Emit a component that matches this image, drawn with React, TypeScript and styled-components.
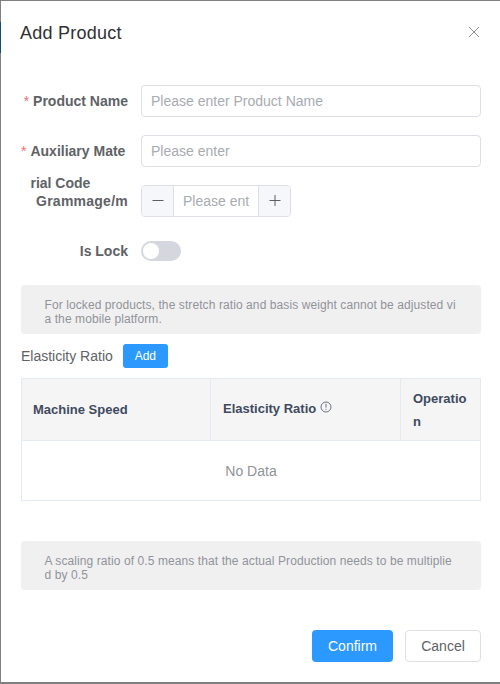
import styled, { createGlobalStyle } from 'styled-components';

const GlobalStyle = createGlobalStyle`
  html, body {
    margin: 0;
    padding: 0;
    background: #808080;
  }
  * {
    box-sizing: border-box;
  }
  input::placeholder {
    color: #a8abb2;
    opacity: 1;
  }
`;

function CloseIcon() {
  return (
    <CloseMark width="12" height="12" viewBox="0 0 12 12" fill="none">
      <path d="M1 1L11 11M11 1L1 11" stroke="#8a8f99" strokeWidth="1" />
    </CloseMark>
  );
}

function InfoIcon() {
  return (
    <svg width="12" height="12" viewBox="0 0 12 12" fill="none">
      <circle cx="6" cy="6" r="5" stroke="#4a5266" strokeWidth="0.8" />
      <path d="M6 2.8v3.8M6 7.9v1" stroke="#4a5266" strokeWidth="0.8" />
    </svg>
  );
}

function StepIcon({ plus }: { plus?: boolean }) {
  return (
    <svg width="12" height="12" viewBox="0 0 12 12" fill="none">
      <path d={plus ? 'M0.5 5.5h11M6 0v11' : 'M0.5 5.5h11'} stroke="#5a5e66" strokeWidth="1" />
    </svg>
  );
}

function App() {
  return (
    <>
      <GlobalStyle />
      <Overlay>
        <BlueEdge />
        <Modal>
          <Header>
            <Title>Add Product</Title>
            <CloseIcon />
          </Header>
          <Body>
            <FormRow>
              <Label>
                <Star>*</Star>
                <LabelText>Product Name</LabelText>
              </Label>
              <TextInput placeholder="Please enter Product Name" />
            </FormRow>
            <FormRow>
              <Label>
                <Star>*</Star>
                <LabelText>Auxiliary Material Code</LabelText>
              </Label>
              <TextInput placeholder="Please enter" />
            </FormRow>
            <FormRow>
              <Label>
                <LabelText $wide>Grammage/m</LabelText>
              </Label>
              <NumberBox>
                <StepButton>
                  <StepIcon />
                </StepButton>
                <NumberInput placeholder="Please enter" />
                <StepButton $right>
                  <StepIcon plus />
                </StepButton>
              </NumberBox>
            </FormRow>
            <FormRow>
              <Label>
                <LabelText>Is Lock</LabelText>
              </Label>
              <SwitchTrack>
                <SwitchThumb />
              </SwitchTrack>
            </FormRow>
            <Notice>
              For locked products, the stretch ratio and basis weight cannot be adjusted via the mobile platform.
            </Notice>
            <SectionRow>
              <SectionTitle>Elasticity Ratio</SectionTitle>
              <SmallButton>Add</SmallButton>
            </SectionRow>
            <Table>
              <thead>
                <tr>
                  <HeadCell $width={189}>Machine Speed</HeadCell>
                  <HeadCell $width={190}>
                    Elasticity Ratio <InfoMark><InfoIcon /></InfoMark>
                  </HeadCell>
                  <HeadCell $width={80}>Operation</HeadCell>
                </tr>
              </thead>
              <tbody>
                <tr>
                  <EmptyCell colSpan={3}>No Data</EmptyCell>
                </tr>
              </tbody>
            </Table>
            <LowerNotice>
              A scaling ratio of 0.5 means that the actual Production needs to be multiplied by 0.5
            </LowerNotice>
            <Footer>
              <PrimaryButton>Confirm</PrimaryButton>
              <PlainButton>Cancel</PlainButton>
            </Footer>
          </Body>
        </Modal>
      </Overlay>
    </>
  );
}

const Overlay = styled.div`
  position: relative;
  width: 500px;
  height: 684px;
  padding: 1px 0 2px 1px;
  background: #808080;
  overflow: hidden;
`;

const BlueEdge = styled.div`
  position: absolute;
  left: 0;
  top: 22px;
  width: 1px;
  height: 31px;
  background: #0f4c81;
`;

const Modal = styled.div`
  height: 681px;
  background: #fff;
  font-family: 'Liberation Sans', Arial, sans-serif;
  font-size: 14px;
  color: #606266;
`;

const Header = styled.div`
  display: flex;
  align-items: center;
  justify-content: space-between;
  height: 64px;
  padding: 0 20px 0 19px;
`;

const Title = styled.div`
  font-size: 18px;
  line-height: 24px;
  letter-spacing: 0.25px;
  color: #303133;
`;

const CloseMark = styled.svg`
  margin-bottom: 2px;
`;

const Body = styled.div`
  padding: 20px 19px 0 20px;
`;

const FormRow = styled.div`
  display: flex;
  height: 32px;
  margin-bottom: 18px;
`;

const Label = styled.label`
  display: flex;
  flex: none;
  justify-content: flex-end;
  width: 108px;
  height: 32px;
  margin-right: 12px;
  padding-right: 1px;
  font-weight: 700;
  line-height: 32px;
`;

const Star = styled.span`
  flex: none;
  margin-right: 4px;
  color: #f56c6c;
  font-weight: 400;
`;

const LabelText = styled.span<{ $wide?: boolean }>`
  letter-spacing: ${(p) => (p.$wide ? '0.25px' : 'normal')};
  word-break: break-all;
`;

const TextInput = styled.input`
  flex: 1;
  min-width: 0;
  height: 32px;
  padding: 0 9px;
  border: 1px solid #dcdfe6;
  border-radius: 4px;
  outline: none;
  font: inherit;
  color: #606266;
`;

const NumberBox = styled.div`
  display: flex;
  width: 150px;
  height: 32px;
  border: 1px solid #dcdfe6;
  border-radius: 4px;
  overflow: hidden;
`;

const StepButton = styled.div<{ $right?: boolean }>`
  display: flex;
  flex: none;
  align-items: center;
  justify-content: center;
  width: 32px;
  background: #f5f7fa;
  border-left: ${(p) => (p.$right ? '1px solid #dcdfe6' : 'none')};
  border-right: ${(p) => (p.$right ? 'none' : '1px solid #dcdfe6')};
`;

const NumberInput = styled.input`
  flex: 1;
  min-width: 0;
  padding: 0 9px;
  border: none;
  outline: none;
  font: inherit;
`;

const SwitchTrack = styled.div`
  display: flex;
  align-items: center;
  align-self: center;
  width: 40px;
  height: 20px;
  padding: 0 2px;
  border-radius: 10px;
  background: #d4d7de;
`;

const SwitchThumb = styled.div`
  width: 16px;
  height: 16px;
  border-radius: 50%;
  background: #fff;
`;

const Notice = styled.div`
  padding: 13px 23.5px 8px;
  border-radius: 4px;
  background: #f0f0f1;
  color: #909399;
  font-size: 12px;
  line-height: 14px;
  letter-spacing: 0.09px;
  word-break: break-all;
`;

const LowerNotice = styled(Notice)`
  margin-top: 40px;
`;

const SectionRow = styled.div`
  display: flex;
  align-items: center;
  height: 24px;
  margin: 10px 0;
`;

const SectionTitle = styled.div`
  margin-right: 10px;
`;

const SmallButton = styled.div`
  width: 45px;
  height: 24px;
  border-radius: 3px;
  background: #2b99ff;
  color: #fff;
  font-size: 12px;
  line-height: 24px;
  text-align: center;
`;

const Table = styled.table`
  border-collapse: collapse;
  table-layout: fixed;
`;

const HeadCell = styled.th<{ $width: number }>`
  width: ${(p) => p.$width}px;
  height: 62px;
  padding: 7.5px 11px 7.5px 12px;
  border: 1px solid #e4eaf2;
  background: #f5f5f5;
  color: #3f4a5f;
  font-size: 13px;
  line-height: 23px;
  text-align: left;
  word-break: break-all;

  &:first-child {
    padding-left: 11px;
  }
`;

const InfoMark = styled.span`
  position: relative;
  top: -2px;
  vertical-align: middle;
`;

const EmptyCell = styled.td`
  height: 60px;
  border: 1px solid #e4eaf2;
  color: #909399;
  text-align: center;
`;

const Footer = styled.div`
  display: flex;
  justify-content: flex-end;
  gap: 12px;
  margin-top: 40px;
`;

const PrimaryButton = styled.div`
  width: 81px;
  height: 32px;
  border-radius: 4px;
  background: #2b99ff;
  color: #fff;
  line-height: 32px;
  text-align: center;
`;

const PlainButton = styled.div`
  width: 76px;
  height: 32px;
  border: 1px solid #dcdfe6;
  border-radius: 4px;
  line-height: 30px;
  text-align: center;
`;

export default App;
